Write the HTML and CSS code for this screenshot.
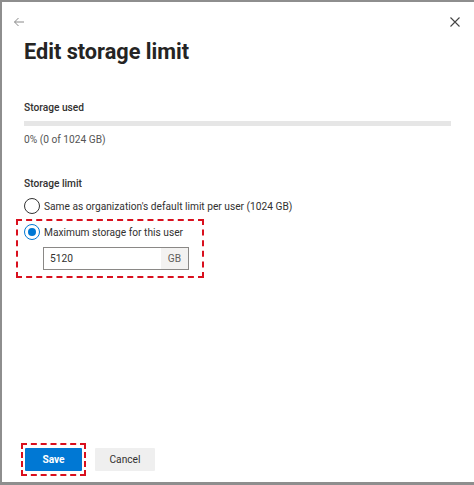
FILE: index.html
```html
<!DOCTYPE html>
<html>
<head>
<meta charset="utf-8">
<link rel="stylesheet" href="styles.css">
</head>
<body>
<div class="panel">
  <div class="topbar">
    <svg class="icon-back" width="12" height="12" viewBox="0 0 12 12"><path d="M11 6H1.5M5.5 2L1.5 6l4 4" fill="none" stroke="#8a8a8a" stroke-width="1"/></svg>
    <svg class="icon-close" width="12" height="12" viewBox="0 0 12 12"><path d="M1.5 1.5l9 9M10.5 1.5l-9 9" fill="none" stroke="#444" stroke-width="1.1"/></svg>
  </div>
  <div class="content">
    <h1 class="title">Edit storage limit</h1>
    <div class="label label-used">Storage used</div>
    <div class="bar"><div class="bar-fill" style="width:0%"></div></div>
    <div class="muted">0% (0 of 1024 GB)</div>
    <div class="label label-limit">Storage limit</div>
    <div class="radio-row">
      <span class="radio"></span>
      <span class="radio-text">Same as organization's default limit per user (1024 GB)</span>
    </div>
    <div class="highlight highlight-option">
      <div class="radio-row radio-row-inner">
        <span class="radio radio-checked"></span>
        <span class="radio-text">Maximum storage for this user</span>
      </div>
      <div class="field">
        <span class="field-value">5120</span>
        <span class="field-suffix">GB</span>
      </div>
    </div>
  </div>
  <div class="footer">
    <div class="highlight highlight-save">
      <button class="btn btn-primary">Save</button>
    </div>
    <button class="btn btn-default">Cancel</button>
  </div>
</div>
</body>
</html>
```
FILE: styles.css
```css
html, body {
  margin: 0;
  padding: 0;
  background: #fff;
}
body {
  font-family: Roboto, "Noto Sans", sans-serif;
  color: #323130;
}
.panel {
  box-sizing: border-box;
  height: 485px;
  width: 474px;
  border-top: 2px solid #8e8e8e;
  border-left: 2px solid #8e8e8e;
  border-bottom: 3px solid #8e8e8e;
  display: flex;
  flex-direction: column;
}
.topbar {
  display: flex;
  justify-content: space-between;
  align-items: center;
  height: 20px;
  margin-top: 10px;
  padding: 0 13px 0 11px;
}
.content {
  padding: 0 23px 0 22px;
  flex: 1;
}
.title {
  margin: 5px 0 0 0;
  font-size: 21.7px;
  line-height: 30px;
  font-weight: 700;
  color: #252423;
}
.label {
  font-size: 10.2px;
  font-weight: 500;
  color: #323130;
  line-height: 16px;
}
.label-used {
  margin-top: 33px;
}
.bar {
  margin-top: 5px;
  height: 5px;
  background: #e6e6e6;
}
.bar-fill {
  height: 100%;
  background: #0078d4;
}
.muted {
  margin-top: 6px;
  font-size: 10.2px;
  line-height: 16px;
  color: #555;
}
.label-limit {
  margin-top: 28px;
}
.radio-row {
  display: flex;
  align-items: center;
  gap: 4px;
  margin-top: 4px;
  height: 20px;
}
.radio {
  box-sizing: border-box;
  width: 16px;
  height: 16px;
  border: 1px solid #333;
  border-radius: 50%;
  display: flex;
  align-items: center;
  justify-content: center;
  flex: none;
}
.radio-checked {
  border-color: #0078d4;
}
.radio-checked::after {
  content: "";
  width: 8px;
  height: 8px;
  border-radius: 50%;
  background: #0078d4;
}
.radio-text {
  font-size: 10.2px;
  color: #323130;
  white-space: nowrap;
}
.highlight {
  border: 2px dashed #d9101e;
  box-sizing: border-box;
}
.highlight-option {
  width: 188px;
  margin: 3px 0 0 -8px;
  padding: 0 0 6px 6px;
}
.radio-row-inner {
  margin-top: 1px;
}
.field {
  margin: 5px 0 0 19px;
  width: 146px;
  height: 23px;
  box-sizing: border-box;
  border: 1px solid #8a8886;
  display: flex;
  align-items: stretch;
}
.field-value {
  flex: 1;
  font-size: 10.2px;
  padding-left: 6px;
  display: flex;
  align-items: center;
  color: #323130;
}
.field-suffix {
  width: 27px;
  background: #f3f2f1;
  font-size: 10.2px;
  color: #605e5c;
  display: flex;
  align-items: center;
  justify-content: center;
}
.footer {
  display: flex;
  align-items: center;
  gap: 9px;
  padding: 0 0 6px 19px;
}
.highlight-save {
  padding: 3px 2px;
}
.btn {
  font-family: Roboto, "Noto Sans", sans-serif;
  font-size: 10.2px;
  height: 23px;
  border: none;
  border-radius: 1px;
  padding: 0;
  margin: 0;
}
.btn-primary {
  width: 57px;
  background: #0078d4;
  color: #fff;
  font-weight: 700;
  display: block;
}
.btn-default {
  width: 60px;
  background: #efefef;
  color: #323130;
}
```
